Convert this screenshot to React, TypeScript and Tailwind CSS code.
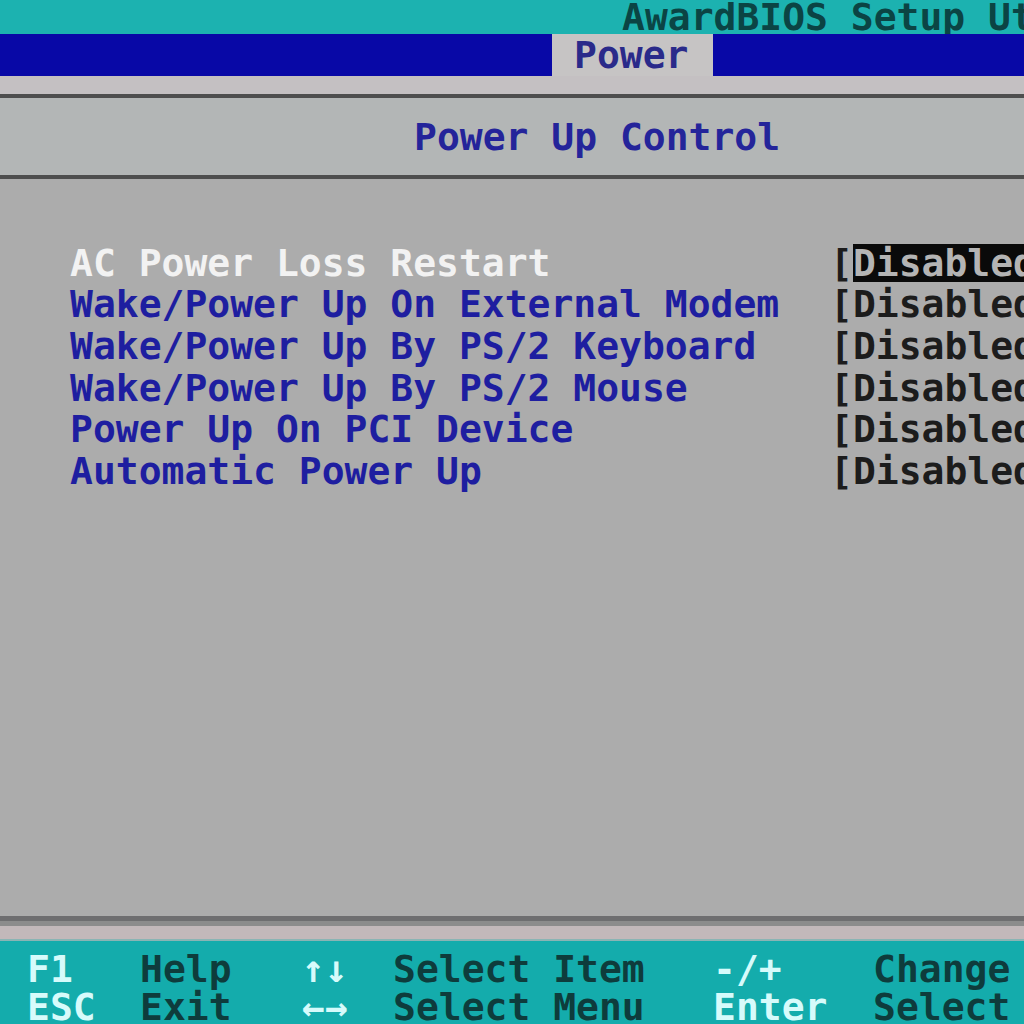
import React from "react";

const items = [
	{ label: "AC Power Loss Restart", value: "Disabled", active: true },
	{ label: "Wake/Power Up On External Modem", value: "Disabled" },
	{ label: "Wake/Power Up By PS/2 Keyboard", value: "Disabled" },
	{ label: "Wake/Power Up By PS/2 Mouse", value: "Disabled" },
	{ label: "Power Up On PCI Device", value: "Disabled" },
	{ label: "Automatic Power Up", value: "Disabled" },
];

const keys = [
	{ k1: "F1", d1: "Help", k2: "ESC", d2: "Exit" },
	{ k1: "↑↓", d1: "Select Item", k2: "←→", d2: "Select Menu" },
	{ k1: "-/+", d1: "Change", k2: "Enter", d2: "Select" },
];

export default function App() {
	return (
		<div
			className="w-[1024px] h-[1024px] overflow-hidden bg-[#acacac] flex flex-col text-[38px] font-bold leading-none"
			style={{ fontFamily: '"DejaVu Sans Mono", "Liberation Mono", monospace' }}
		>
			{/* title strip */}
			<div className="h-[34px] shrink-0 bg-[#1cb2b0] pl-[622px] flex items-center whitespace-nowrap overflow-hidden text-[#0b4444]">
				AwardBIOS Setup Utility
			</div>

			{/* menu bar */}
			<div className="h-[42px] shrink-0 flex">
				<div className="w-[552px] bg-[#0808a6]" />
				<div className="w-[161px] bg-[#c6c4c4] flex items-center pl-[22px] text-[#2a2a8a]">Power</div>
				<div className="flex-1 bg-[#0808a6]" />
			</div>
			<div className="h-[18px] shrink-0 bg-[#c4c0c2]" />
			<div className="h-[4px] shrink-0 bg-[#4e4e4e]" />

			{/* section heading */}
			<div className="h-[77px] shrink-0 bg-[#b3b6b6] flex items-center pl-[414px] text-[#24249a]">
				Power Up Control
			</div>
			<div className="h-[4px] shrink-0 bg-[#4e4e4e]" />

			{/* settings */}
			<div className="flex-1 pt-[63px] flex flex-col overflow-hidden">
				{items.map((it) => (
					<div key={it.label} className="h-[41.6px] flex items-center whitespace-nowrap">
						<div className={`w-[830px] shrink-0 pl-[70px] ${it.active ? "text-[#f2f2f2]" : "text-[#1e1ea0]"}`}>
							{it.label}
						</div>
						<div className="flex items-center shrink-0 text-[#1c1c1c]">
							<span>[</span>
							<span className={it.active ? "bg-[#0a0a0a] text-[#b4b4b4] h-[38px] flex items-center pr-[40px]" : ""}>
								{it.value}]
							</span>
						</div>
					</div>
				))}
			</div>

			{/* footer */}
			<div className="h-[5px] shrink-0 bg-[#6e6e70]" />
			<div className="h-[5px] shrink-0 bg-[#8c8c8c]" />
			<div className="h-[13px] shrink-0 bg-[#c2b8ba]" />
			<div className="h-[2px] shrink-0 bg-[#8ab4b4]" />
			<div className="h-[83px] shrink-0 bg-[#14acac] pt-[9px] pl-[27px] flex whitespace-nowrap">
				{keys.map((g, i) => (
					<div key={i} className="flex flex-col">
						<div className="flex h-[38px] items-center">
							<span
								className={`text-[#d6fbfb] ${i === 0 ? "w-[113px]" : i === 1 ? "w-[91px]" : "w-[160px]"}`}
							>
								{g.k1}
							</span>
							<span className={`text-[#0e3c3c] ${i === 0 ? "w-[162px]" : i === 1 ? "w-[320px]" : "w-[160px]"}`}>
								{g.d1}
							</span>
						</div>
						<div className="flex h-[38px] items-center">
							<span
								className={`text-[#d6fbfb] ${i === 0 ? "w-[113px]" : i === 1 ? "w-[91px]" : "w-[160px]"}`}
							>
								{g.k2}
							</span>
							<span className={`text-[#0e3c3c] ${i === 0 ? "w-[162px]" : i === 1 ? "w-[320px]" : "w-[160px]"}`}>
								{g.d2}
							</span>
						</div>
					</div>
				))}
			</div>
		</div>
	);
}
